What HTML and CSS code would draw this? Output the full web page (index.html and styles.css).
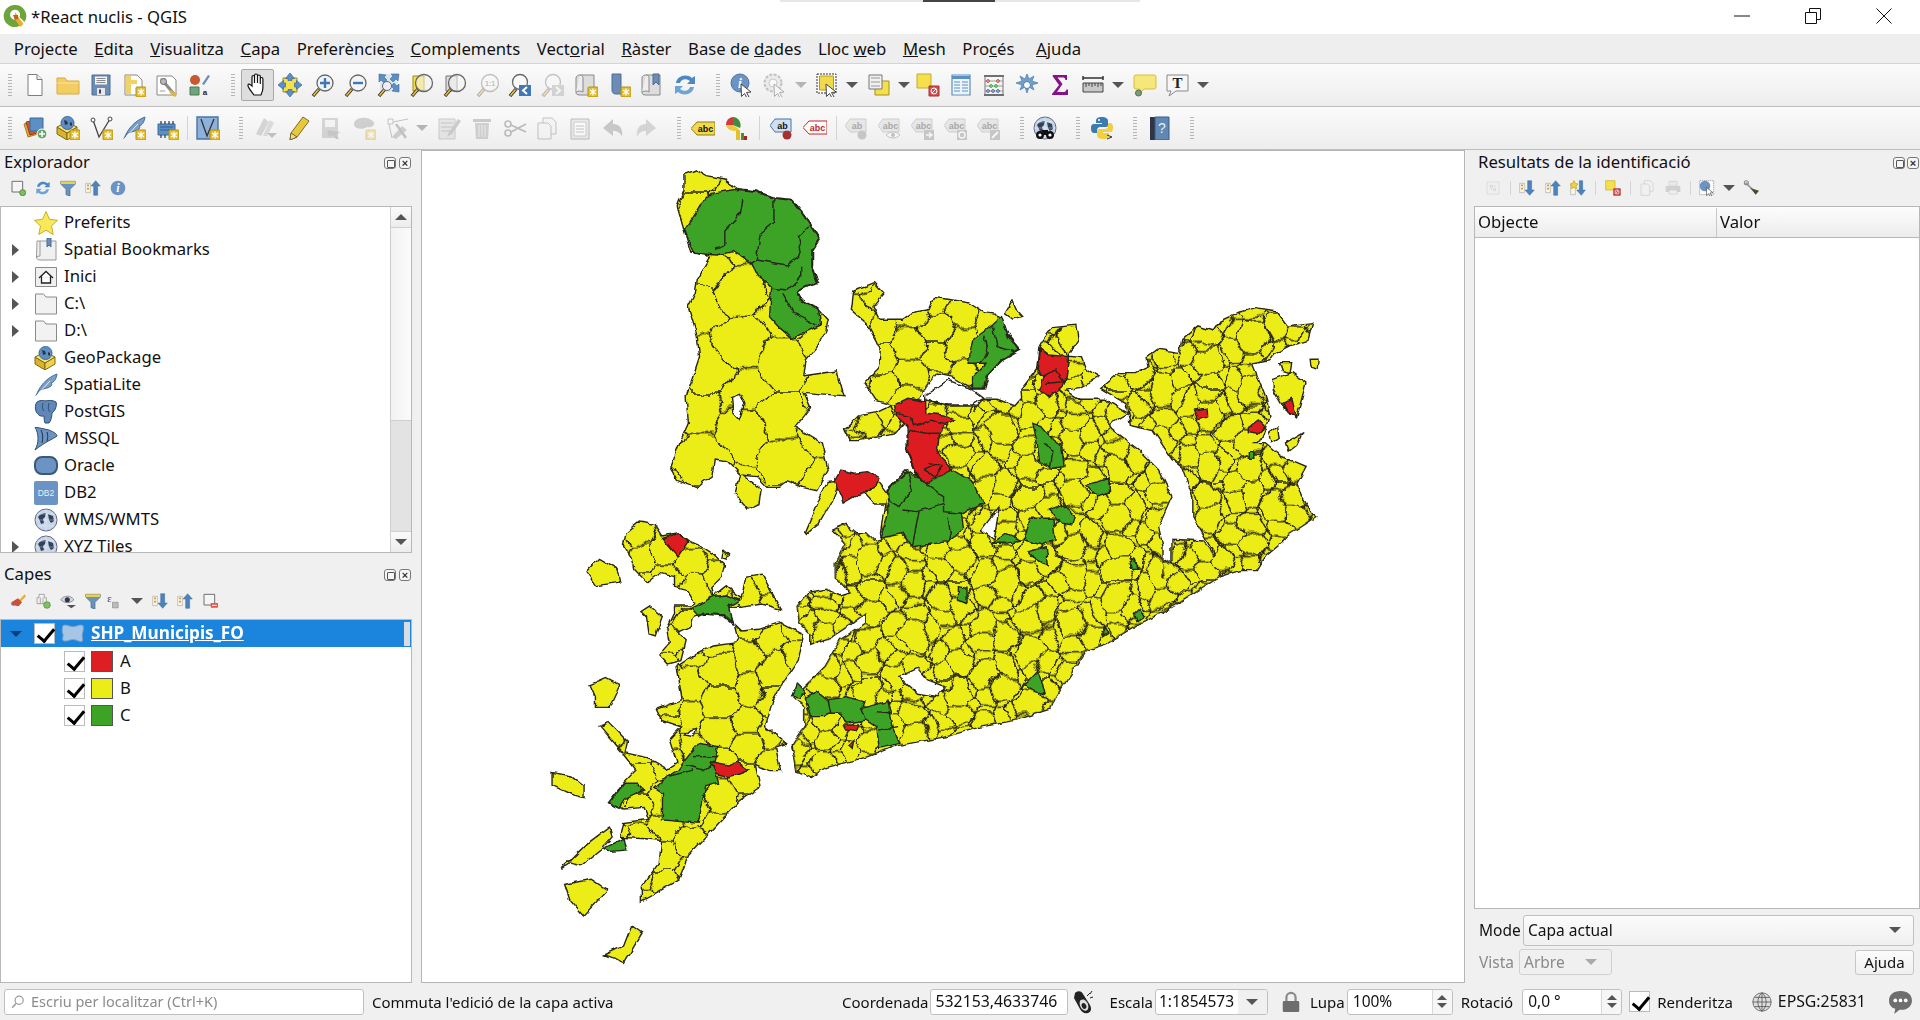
FILE: index.html
```html
<!DOCTYPE html>
<html lang="ca">
<head>
<meta charset="utf-8">
<title>*React nuclis - QGIS</title>
<link rel="stylesheet" href="styles.css">
</head>
<body>
<svg class="defs" width="0" height="0" aria-hidden="true">
<defs>
<g id="badge"><rect x="14" y="14" width="10" height="10" rx="1" fill="#e5bf30" stroke="#b09015"/><path d="M19 15.5v7M16 17l6 4M22 17l-6 4" stroke="#fff" stroke-width="1.3"/></g>
<g id="cur"><path d="M11 11l10 8-4.500 .5 2.500 4.500-2 1-2.500-4.500-3 3z" fill="#fff" stroke="#333" stroke-width=".9"/></g>
<g id="hdl"><path d="M2 23l6-7" stroke="#333" stroke-width="3.400"/><path d="M2.500 22.500l5-6" stroke="#eac23c" stroke-width="1.600"/></g>
<symbol id="new" viewBox="0 0 24 24"><path d="M5 1.500h9l5 5v16H5z" fill="#fff" stroke="#7d7d7d"/><path d="M14 1.500v5h5" fill="#eee" stroke="#7d7d7d"/></symbol>
<symbol id="open" viewBox="0 0 24 24"><path d="M1 5h8l2 3h12v13H1z" fill="#f2ce62" stroke="#dca83a"/><path d="M1 10h22" stroke="#f9e59a"/></symbol>
<symbol id="save" viewBox="0 0 24 24"><path d="M3 2h18v20H3z" fill="#6b8cb4" stroke="#4c6c96"/><path d="M6 3.500h12v8H6z" fill="#f3f3f3"/><path d="M7.500 5.500h9M7.500 7.500h9M7.500 9.500h9" stroke="#888"/><path d="M8 15h8v7H8z" fill="#e8e8e8"/><path d="M10 16.500h2v4h-2z" fill="#445"/></symbol>
<symbol id="saveas" viewBox="0 0 24 24"><path d="M3 2h12l5 5v15H3z" fill="#fff" stroke="#888"/><path d="M4 3h5v18H4z" fill="#f0d368"/><path d="M9 7h6v4H9z" fill="#f0d368"/><use href="#badge"/></symbol>
<symbol id="layout" viewBox="0 0 24 24"><path d="M2 3h15l4 4v15H2z" fill="#fff" stroke="#888"/><path d="M5 6h6M5 9h3M5 18h5" stroke="#999"/><path d="M8 8l11 13" stroke="#8a8a8a" stroke-width="3"/><path d="M15 18l6 5" stroke="#dcb63c" stroke-width="3"/><circle cx="8.500" cy="8.500" r="3" fill="#bbb" stroke="#666"/></symbol>
<symbol id="style" viewBox="0 0 24 24"><circle cx="8" cy="7" r="5" fill="#c9582f"/><path d="M3 14h9v8H3z" fill="#6fa57a" stroke="#4b7a55"/><path d="M15 11l6-9 2 1-6 9z" fill="#6b8cb4"/><text x="18" y="22" class="ictext">a</text></symbol>
<symbol id="hand" viewBox="0 0 24 24"><path d="M9 22c-2-3-6-7-6-9.500s2-1.500 4 .5V4c0-2 2.500-2 2.500 0v6V2.500c0-2 3-2 3 0V10V3.500c0-2 2.800-2 2.800 0V11V6c0-2 2.600-2 2.600 0v9c0 3-1 5-2 7z" fill="#fff" stroke="#111" stroke-width="1.200"/></symbol>
<symbol id="pan" viewBox="0 0 24 24"><path d="M5 5h14v14H5z" fill="#f4df4c" stroke="#9a8a20"/><path d="M12 0l4.500 5.500H14v2h-4v-2H7.500zM12 24l4.500-5.500H14v-2h-4v2H7.500zM0 12l5.500-4.500V10h2v4h-2v2.500zM24 12l-5.500-4.500V10h-2v4h2v2.500z" fill="#5c8fc4" stroke="#3b6a9c" stroke-width=".7"/></symbol>
<symbol id="zin" viewBox="0 0 24 24"><use href="#hdl"/><circle cx="14" cy="10" r="8" fill="#f2f5f8" stroke="#666" stroke-width="1.300"/><path d="M14 5v10M9 10h10" stroke="#3f78b3" stroke-width="2.400"/></symbol>
<symbol id="zout" viewBox="0 0 24 24"><use href="#hdl"/><circle cx="14" cy="10" r="8" fill="#f2f5f8" stroke="#666" stroke-width="1.300"/><path d="M9 10h10" stroke="#3f78b3" stroke-width="2.400"/></symbol>
<symbol id="full" viewBox="0 0 24 24"><path d="M3 1h18v18H3z" fill="#dde6ef"/><path d="M2 1l7 1-2 2 3 3-3 3-3-3-2 2zM22 1l-1 7-2-2-3 3-3-3 3-3-2-2zM22 19l-7-1 2-2-3-3 3-3 3 3 2-2z" fill="#5c8fc4" stroke="#3b6a9c" stroke-width=".6"/><use href="#hdl"/><circle cx="10" cy="13" r="4.500" fill="#eef" stroke="#666"/></symbol>
<symbol id="zsel" viewBox="0 0 24 24"><path d="M3 3h11v15H3z" fill="#f4df4c" stroke="#9a8a20"/><use href="#hdl"/><circle cx="14" cy="10" r="8.500" fill="#f4f4f0" fill-opacity=".55" stroke="#666" stroke-width="1.300"/></symbol>
<symbol id="zlay" viewBox="0 0 24 24"><path d="M3 3h11v15H3z" fill="#ddd" stroke="#777"/><use href="#hdl"/><circle cx="14" cy="10" r="8.500" fill="#f4f4f0" fill-opacity=".55" stroke="#666" stroke-width="1.300"/></symbol>
<symbol id="z11" viewBox="0 0 24 24"><g opacity=".38"><use href="#hdl"/><circle cx="14" cy="10" r="8.500" fill="#fafafa" stroke="#666" stroke-width="1.300"/><text x="14" y="13" class="ictext small">1:1</text></g></symbol>
<symbol id="zlast" viewBox="0 0 24 24"><use href="#hdl"/><circle cx="12" cy="9" r="7.500" fill="#fafafa" stroke="#666" stroke-width="1.300"/><path d="M11 12h12v11H11z" fill="#3f78b3"/><path d="M19 14l-4 3.500 4 3.500" fill="none" stroke="#fff" stroke-width="2"/></symbol>
<symbol id="znext" viewBox="0 0 24 24"><g opacity=".35"><use href="#hdl"/><circle cx="12" cy="9" r="7.500" fill="#fafafa" stroke="#666" stroke-width="1.300"/><path d="M11 12h12v11H11z" fill="#999"/><path d="M15 14l4 3.500-4 3.500" fill="none" stroke="#fff" stroke-width="2"/></g></symbol>
<symbol id="scroll" viewBox="0 0 24 24"><path d="M6 2h14v20H6c-3 0-4-1-4-3V5c0-2 2-3 4-3z" fill="#ddd" stroke="#888"/><path d="M6 2c3 0 3 3 3 3v14c-2-1.500-5-1-7 0" fill="#eee" stroke="#888"/></symbol>
<symbol id="newmap" viewBox="0 0 24 24"><use href="#scroll"/><use href="#badge"/></symbol>
<symbol id="newbm" viewBox="0 0 24 24"><path d="M5 1h9v16l4 4H9c-3 0-4-2-4-4z" fill="#6b8cb4" stroke="#4c6c96"/><use href="#badge"/></symbol>
<symbol id="showbm" viewBox="0 0 24 24"><use href="#scroll"/><path d="M13 1h6v11l-3-3-3 3z" fill="#6b8cb4" stroke="#4c6c96"/></symbol>
<symbol id="refresh" viewBox="0 0 24 24"><path d="M3 10C4 3 13 0 19 5l3-2v8h-8l3-3c-4-3-9-2-10 2z" fill="#4d88c4"/><path d="M21 14c-1 7-10 10-16 5l-3 2v-8h8l-3 3c4 3 9 2 10-2z" fill="#6ea3d6"/></symbol>
<symbol id="ident" viewBox="0 0 24 24"><circle cx="10" cy="10" r="9" fill="#6b93c4" stroke="#4c73a2"/><text x="10" y="15" class="ictext italic">i</text><use href="#cur"/></symbol>
<symbol id="actions" viewBox="0 0 24 24"><g opacity=".4"><circle cx="10" cy="10" r="8.500" fill="#ddd" stroke="#777" stroke-width="2" stroke-dasharray="3 1.500"/><circle cx="10" cy="10" r="4" fill="#fff" stroke="#888"/><use href="#cur"/></g></symbol>
<symbol id="select" viewBox="0 0 24 24"><path d="M2 1h19v19H2z" fill="#fff" stroke="#333" stroke-dasharray="2 1"/><path d="M4.500 3h14v14h-14z" fill="#f2d94c" stroke="#b59c20"/><use href="#cur"/></symbol>
<symbol id="select2" viewBox="0 0 24 24"><path d="M8 8h14v14H8z" fill="#f4df4c" stroke="#a59020"/><path d="M2 2h13v14H2z" fill="#f1f1f1" stroke="#777"/><path d="M4 5h9M4 9h9M4 13h9" stroke="#999"/></symbol>
<symbol id="desel" viewBox="0 0 24 24"><path d="M1 1h14v14H1z" fill="#f4df4c" stroke="#c5ac2a"/><path d="M13 13h10v10H13z" fill="#d8494c" stroke="#a33"/><circle cx="18" cy="18" r="3" fill="none" stroke="#fff"/><path d="M16 20l4-4" stroke="#fff"/></symbol>
<symbol id="table" viewBox="0 0 24 24"><path d="M3 2h18v20H3z" fill="#eef4fa" stroke="#5c8fc4" stroke-width="1.200"/><path d="M3 3h18v3H3z" fill="#5c8fc4"/><path d="M5 9h6M13 9h6M5 12h6M13 12h6M5 15h6M13 15h6M5 18h6M13 18h6" stroke="#5c8fc4" stroke-width="1.200"/></symbol>
<symbol id="abacus" viewBox="0 0 24 24"><path d="M2 3h20M2 22h20" stroke="#444" stroke-width="1.600"/><path d="M3 3v19M21 3v19" stroke="#777"/><path d="M3 8h18M3 13h18M3 18h18" stroke="#888" stroke-width=".8"/><g fill="none" stroke-width="1"><circle cx="6" cy="8" r="1.400" stroke="#c44"/><circle cx="16" cy="8" r="1.400" stroke="#c44"/><circle cx="9" cy="13" r="1.400" stroke="#3a3"/><circle cx="14" cy="13" r="1.400" stroke="#3a3"/><circle cx="6" cy="18" r="1.400" stroke="#46a"/><circle cx="11" cy="18" r="1.400" stroke="#46a"/><circle cx="16" cy="18" r="1.400" stroke="#46a"/></g></symbol>
<symbol id="gear" viewBox="0 0 24 24"><path d="M12 1l2 5 5-3-2 5 6 2-6 2 2 5-5-3-2 6-2-6-5 3 2-5-6-2 6-2-2-5 5 3z" fill="#6ea0d0" stroke="#4c7bab" stroke-width=".7"/><circle cx="12" cy="12" r="3.500" fill="#fff" stroke="#4c7bab"/></symbol>
<symbol id="sigma" viewBox="0 0 24 24"><path d="M5 2h14v5h-1.500c-.5-2-1-2.500-3-2.500H9.500L14.500 11 9 19h6c2 0 3-.5 3.500-2.500H20V22H4v-1l7-9L4.500 3z" fill="#85128a"/></symbol>
<symbol id="ruler" viewBox="0 0 24 24"><path d="M2 5h20M2 3v4M22 3v4" stroke="#333" stroke-width="1.500"/><path d="M2 10h20v9H2z" fill="#c9c9c9" stroke="#444"/><path d="M5 10v4M8 10v3M11 10v4M14 10v3M17 10v4M20 10v3" stroke="#444"/></symbol>
<symbol id="tip" viewBox="0 0 24 24"><path d="M3 2h18a2 2 0 0 1 2 2v10a2 2 0 0 1-2 2H11l-4 4v-4H3a2 2 0 0 1-2-2V4a2 2 0 0 1 2-2z" fill="#f5e87a" stroke="#d6bc3c"/><circle cx="5.500" cy="20" r="3" fill="#7aa06a" stroke="#567"/></symbol>
<symbol id="txtann" viewBox="0 0 24 24"><path d="M1 2h21v16H10l-7 5 2-5H1z" fill="#f6f6f6" stroke="#888"/><text x="11.500" y="15" class="ictext serif">T</text></symbol>
<symbol id="dsm" viewBox="0 0 24 24"><path d="M1 8l10-3 4 13-10 3z" fill="#e3a83c" stroke="#a97a20"/><path d="M3 6l10-2 4 12-10 3z" fill="#c9582f" stroke="#8f3d20"/><path d="M7 2h13v13H7z" fill="#5c8fc4" stroke="#3b6a9c"/><circle cx="19" cy="18" r="5" fill="#6ca36c" stroke="#fff"/><path d="M19 15v6M16 18h6" stroke="#fff" stroke-width="1.600"/></symbol>
<symbol id="gpkg" viewBox="0 0 24 24"><path d="M1 11l10 6v7L1 18z" fill="#d9b32c" stroke="#7c6a14"/><path d="M21 11l-10 6v7l10-6z" fill="#f0d34c" stroke="#7c6a14"/><path d="M1 11l10-5 10 5-10 6z" fill="#f5e27a" stroke="#7c6a14"/><circle cx="11.500" cy="7" r="6.500" fill="#5c8fc4" stroke="#3b6a9c"/><path d="M8 4l3 1 1 3-3 1zM14 6l2 1v3l-2-1z" fill="#334"/></symbol>
<symbol id="newgpkg" viewBox="0 0 24 24"><use href="#gpkg"/><use href="#badge"/></symbol>
<symbol id="newshp" viewBox="0 0 24 24"><path d="M4 4l6 17L21 3" fill="none" stroke="#444" stroke-width="1.300"/><circle cx="4" cy="4" r="2" fill="#fff" stroke="#444"/><circle cx="21" cy="3" r="2" fill="#fff" stroke="#444"/><use href="#badge"/></symbol>
<symbol id="feather" viewBox="0 0 24 24"><path d="M2 23C5 14 12 5 23 1c-1 6-3 8-6 9 1 1 1 2 0 3-3 3-9 2-12 5z" fill="#7c9fc8" stroke="#456d9c"/><path d="M2 23L16 8" stroke="#fff" stroke-width=".8"/></symbol>
<symbol id="newfeather" viewBox="0 0 24 24"><use href="#feather"/><use href="#badge"/></symbol>
<symbol id="chip" viewBox="0 0 24 24"><path d="M3 8h17v11H3z" fill="#5c8fc4" stroke="#3b6a9c"/><path d="M6 5v3M10 5v3M14 5v3M18 5v3M6 19v3M10 19v3" stroke="#333" stroke-width="1.200"/><path d="M5 11h13M5 14h13" stroke="#2c5c92"/><use href="#badge"/></symbol>
<symbol id="virt" viewBox="0 0 24 24"><path d="M1 1h21v22H1z" fill="#8db1d8" stroke="#4c73a2" stroke-width="1.400"/><path d="M5 3l6 17L18 3" fill="none" stroke="#333" stroke-width="1.300"/><use href="#badge"/></symbol>
<symbol id="g-edits" viewBox="0 0 24 24"><g opacity=".35"><path d="M3 18L11 2l5 4-8 14z" fill="#999"/><path d="M10 20L17 4l4 3-7 13z" fill="#aaa"/><path d="M14 17h10l-5 5z" fill="#666"/></g></symbol>
<symbol id="pencil" viewBox="0 0 24 24"><path d="M4 24l1-7L17 1l6 4-12 16z" fill="#eac83c" stroke="#7a6a20"/><path d="M4 24l1-7 6 4z" fill="#e8d9b0" stroke="#7a6a20"/></symbol>
<symbol id="g-save" viewBox="0 0 24 24"><g opacity=".35"><path d="M3 2h16v20H3z" fill="#999"/><path d="M6 4h10v7H6z" fill="#eee"/><path d="M8 14l13 2-4 3 3 4-3 0-3-4-4 2z" fill="#777"/></g></symbol>
<symbol id="g-add" viewBox="0 0 24 24"><g opacity=".35"><path d="M3 5c5-5 14-4 19 1 1 5-5 6-7 5-2 2-7 2-10 1-3-1-4-5-2-7z" fill="#888"/><use href="#badge"/></g></symbol>
<symbol id="g-vert" viewBox="0 0 24 24"><g opacity=".35"><path d="M3 3h5v5H3zM4 8l3 14M8 6l15-3" fill="none" stroke="#666"/><path d="M7 21l10-11 5 4-11 9z" fill="#888"/><path d="M11 8l10 14" stroke="#666" stroke-width="2.500"/></g></symbol>
<symbol id="g-mod" viewBox="0 0 24 24"><g opacity=".38"><path d="M2 3h16v20H2z" fill="#ccc" stroke="#888"/><path d="M4 7h12M4 11h12M4 15h12" stroke="#777"/><path d="M10 21l2-5 9-13 3 2-9 13z" fill="#888"/></g></symbol>
<symbol id="g-del" viewBox="0 0 24 24"><g opacity=".4"><path d="M3 3h18v3H3z" fill="#888"/><path d="M5 7h14l-1 16H6z" fill="#999"/><path d="M9 9v12M12 9v12M15 9v12" stroke="#ddd"/></g></symbol>
<symbol id="g-cut" viewBox="0 0 24 24"><g opacity=".4" fill="none" stroke="#666" stroke-width="1.600"><circle cx="5" cy="8" r="3"/><circle cx="5" cy="17" r="3"/><path d="M8 9l15 7M8 16L23 8"/></g></symbol>
<symbol id="g-copy" viewBox="0 0 24 24"><g opacity=".4" fill="#f2f2f2" stroke="#777"><path d="M8 2h9l4 4v12H8z"/><path d="M3 7h10l3 3v13H3z"/></g></symbol>
<symbol id="g-paste" viewBox="0 0 24 24"><g opacity=".45"><path d="M3 3h18v20H3z" fill="#ddd" stroke="#777"/><path d="M6 6h12v14H6z" fill="#fff" stroke="#999"/><path d="M8 10h8M8 13h8M8 16h8" stroke="#888"/></g></symbol>
<symbol id="g-undo" viewBox="0 0 24 24"><path d="M2 12L12 3v5c7 0 10 5 9 13-2-5-5-6-9-6v5z" fill="#c8c8c8"/></symbol>
<symbol id="g-redo" viewBox="0 0 24 24"><path d="M22 12L12 3v5C5 8 2 13 3 21c2-5 5-6 9-6v5z" fill="#d4d4d4"/></symbol>
<symbol id="lab-y" viewBox="0 0 24 24"><path d="M6 6h18v13H6L0 12.500z" fill="#f2d94c" stroke="#8f7c18"/><text x="14.500" y="16" class="ictext lab">abc</text></symbol>
<symbol id="diag" viewBox="0 0 24 24"><path d="M2 9a7.500 7.500 0 0 1 7-8v8z" fill="#d23b3b"/><path d="M9 1a8 8 0 0 1 7 11L9 9z" fill="#3e8e3e"/><path d="M2 9h7l6 4a8 8 0 0 1-13-4z" fill="#e8cc3a"/><path d="M12 14h4v10h-4z" fill="#e0c02c"/><path d="M17 17h3v7h-3z" fill="#4c8e30"/><path d="M20 20h3v4h-3z" fill="#a22"/></symbol>
<symbol id="lab-b" viewBox="0 0 24 24"><path d="M5 3h16v13H5L0 9.500z" fill="#cfe0f2" stroke="#4c73a2"/><text x="12.500" y="13" class="ictext lab">ab</text><path d="M16 14h2v3h-2z" fill="#fff"/><circle cx="17" cy="19" r="4.500" fill="#a63030"/></symbol>
<symbol id="lab-r" viewBox="0 0 24 24"><path d="M6 5h18v13H6L0 11.500z" fill="#fff" stroke="#c22"/><text x="14.500" y="15" class="ictext lab red">abc</text></symbol>
<symbol id="g-lp" viewBox="0 0 24 24"><g opacity=".35"><path d="M5 3h16v13H5L0 9.500z" fill="#ccc" stroke="#888"/><text x="12" y="13" class="ictext lab">ab</text><circle cx="17" cy="19" r="4.500" fill="#777"/></g></symbol>
<symbol id="g-lv" viewBox="0 0 24 24"><g opacity=".35"><path d="M5 3h16v13H5L0 9.500z" fill="#ccc" stroke="#888"/><text x="12.500" y="13" class="ictext lab">abc</text><path d="M8 19c4-4 10-4 14 0-4 4-10 4-14 0z" fill="#fff" stroke="#666"/><circle cx="15" cy="19" r="2" fill="#666"/></g></symbol>
<symbol id="g-lm" viewBox="0 0 24 24"><g opacity=".35"><path d="M5 3h16v13H5L0 9.500z" fill="#ccc" stroke="#888"/><text x="12.500" y="13" class="ictext lab">abc</text><path d="M13 14h10v10H13z" fill="#777"/><path d="M15 19h5M18 16.500l3 2.500-3 2.500" fill="none" stroke="#fff" stroke-width="1.500"/></g></symbol>
<symbol id="g-lr" viewBox="0 0 24 24"><g opacity=".35"><path d="M5 3h16v13H5L0 9.500z" fill="#ccc" stroke="#888"/><text x="12.500" y="13" class="ictext lab">abc</text><path d="M13 14h10v10H13z" fill="#777"/><circle cx="18" cy="19" r="3" fill="none" stroke="#fff" stroke-width="1.500"/></g></symbol>
<symbol id="g-le" viewBox="0 0 24 24"><g opacity=".35"><path d="M5 3h16v13H5L0 9.500z" fill="#ccc" stroke="#888"/><text x="12.500" y="13" class="ictext lab">abc</text><path d="M13 14h10v10H13z" fill="#777"/><path d="M15 22l6-6" stroke="#fff" stroke-width="2"/></g></symbol>
<symbol id="globe" viewBox="0 0 24 24"><circle cx="12" cy="12" r="11" fill="#c5d6e8" stroke="#668"/><path d="M4 9c2-3 5-4 8-4l-1 4-2 2 1 4-3 1-1-3zM14 6l5 2 1 5-3 2-2-3z" fill="#33415a"/><path d="M1 12h22M12 1v22M3 6h18M3 18h18" stroke="#fff" stroke-width=".5" opacity=".7"/></symbol>
<symbol id="metasearch" viewBox="0 0 24 24"><use href="#globe"/><path d="M3 19a4 4 0 1 0 8 0 4 4 0 1 0-8 0zM13 19a4 4 0 1 0 8 0 4 4 0 1 0-8 0z" fill="#111"/><path d="M9 14h6v5H9z" fill="#111"/><circle cx="7" cy="19" r="1.600" fill="#fff"/><circle cx="17" cy="19" r="1.600" fill="#fff"/></symbol>
<symbol id="python" viewBox="0 0 24 24"><path d="M12 1c-4 0-6 1-6 4v2h6v1H4c-3 0-3 3-3 5s1 4 3 4h3v-3c0-2 2-3 3-3h6c2 0 2-1 2-3V5c0-3-3-4-6-4z" fill="#3d7ab0"/><path d="M13 23c4 0 6-1 6-4v-2h-6v-1h8c2 0 2-3 2-5s-1-4-3-4h-2v3c0 2-2 3-3 3H9c-2 0-2 1-2 3v3c0 3 3 4 6 4z" fill="#f2cf3e"/><circle cx="9" cy="4" r="1" fill="#fff"/><path d="M17 19l5 2-5 2" fill="none" stroke="#333"/></symbol>
<symbol id="help" viewBox="0 0 24 24"><path d="M3 1h5v23H3z" fill="#2f3542"/><path d="M8 1h14v23H8z" fill="#5f88b4" stroke="#3b5c84"/><text x="15" y="17" class="ictext helpq">?</text></symbol>
<symbol id="star" viewBox="0 0 24 24"><path d="M12 .5l3.500 7.800 8 1-6 5.700 1.700 8.500-7.200-4.300-7.200 4.300L6.500 15 .5 9.300l8-1z" fill="#f8e95a" stroke="#c9ad28"/></symbol>
<symbol id="bookm" viewBox="0 0 24 24"><path d="M3 3h19v19H6c-2 0-3.500-1-3.500-3z" fill="#f0f0f0" stroke="#999"/><path d="M6 3v15c-1 0-2.500.5-3.500 1" fill="none" stroke="#999"/><path d="M13 0h4v9l-2-2-2 2z" fill="#6b8cb4" stroke="#4c6c96"/></symbol>
<symbol id="home" viewBox="0 0 24 24"><path d="M1.500 2.500h21v19h-21z" fill="#f0f0f0" stroke="#8a8a8a"/><path d="M5 13l7-6.500 7 6.500M7.500 11.500V18h9v-6.500" fill="#fff" stroke="#222" stroke-width="1.300"/></symbol>
<symbol id="dir" viewBox="0 0 24 24"><path d="M1.500 2h8l2.500 3h10.500v17h-21z" fill="#f2f2f2" stroke="#8a8a8a"/></symbol>
<symbol id="elephant" viewBox="0 0 24 24"><path d="M3 2c3-2 6-2 8-1 3-1 8-1 11 1 1 2 0 7-2 9l-2 2c0 3-1 8-3 10h-4c-1-3-1-5-1-7-4 1-7-2-8-5C1 9 1 4 3 2z" fill="#5f88b8" stroke="#2f4f76" stroke-width="1"/><path d="M9 3c-1 3-1 6 1 8M15 3c-1 4-1 7 1 9" fill="none" stroke="#2f4f76" stroke-width="1"/></symbol>
<symbol id="mssql" viewBox="0 0 24 24"><path d="M1 0l14 3c5 2 8 4 8 6-4 3-12 6-22 14 4-7 4-16 0-23z" fill="#6b93c4" stroke="#2f4f76" stroke-width="1"/><path d="M7 3c2 4 2 8 1 13M13 5c1 3 1 6 0 9" fill="none" stroke="#234"/></symbol>
<symbol id="oracle" viewBox="0 0 24 24"><rect x="1" y="3" width="22" height="17" rx="7" fill="#6b93c4" stroke="#3a5878" stroke-width="2"/></symbol>
<symbol id="db2" viewBox="0 0 24 24"><rect x="0" y="0" width="24" height="24" rx="2" fill="#6b93c4"/><text x="12" y="15" class="ictext db2">DB2</text></symbol>
<symbol id="layer-ic" viewBox="0 0 24 24"><path d="M1 3c4-2 6 1 11 1s7-3 11-1c1 5-1 8-1 10 0 3 1 5 0 7-3 1-6-2-10-2s-7 3-11 1c-1-3 1-5 0-7S0 7 1 3z" fill="#a6c4e4" stroke="#7ea1c8"/></symbol>
<symbol id="s-add" viewBox="0 0 24 24"><path d="M3 2h16v16H3z" fill="#f5f5f5" stroke="#666" stroke-width="1.400"/><circle cx="19" cy="19" r="4.500" fill="#7fbf62" stroke="#4d8a35" stroke-width="1.400"/></symbol>
<symbol id="s-filter" viewBox="0 0 24 24"><path d="M1 2h22v4l-8 8v10l-6-2v-8L1 6z" fill="#6a94bd" stroke="#44658a"/><path d="M1 2h22v4H1z" fill="#e8d34c"/></symbol>
<symbol id="s-collapse" viewBox="0 0 24 24"><path d="M1 5h7v14H1z" fill="#fbf7e8" stroke="#aaa"/><path d="M3 8h3M3 13h3" stroke="#d4a030" stroke-width="2.500"/><path d="M16 1l7 8h-4v14h-6V9H9z" fill="#4d83bb" stroke="#38689a" stroke-width=".7"/></symbol>
<symbol id="s-expand" viewBox="0 0 24 24"><path d="M1 5h7v14H1z" fill="#fbf7e8" stroke="#aaa"/><path d="M3 8h3M3 13h3" stroke="#d4a030" stroke-width="2.500"/><path d="M16 23l7-8h-4V1h-6v14H9z" fill="#4d83bb" stroke="#38689a" stroke-width=".7"/></symbol>
<symbol id="s-expsel" viewBox="0 0 24 24"><path d="M1 8h7v14H1z" fill="#fbf7e8" stroke="#aaa"/><path d="M6 1l2 4 4 1-3 3 1 4-4-2-4 2 1-4-3-3 4-1z" fill="#f2d33c" stroke="#c49a1c"/><path d="M17 23l6-8h-4V1h-5v14h-4z" fill="#4d83bb" stroke="#38689a" stroke-width=".7"/></symbol>
<symbol id="s-info" viewBox="0 0 24 24"><circle cx="12" cy="12" r="11" fill="#6b93c4"/><text x="12" y="18" class="ictext italic big">i</text></symbol>
<symbol id="s-brush" viewBox="0 0 24 24"><path d="M14 10l8-8 2 3-8 8z" fill="#e8b02c"/><path d="M2 14l10-6 6 6-5 6-9-2z" fill="#c8503c"/><path d="M2 14l5 6-5-2z" fill="#777"/></symbol>
<symbol id="s-group" viewBox="0 0 24 24"><path d="M6 2h8v5h3v9H3V7h3z" fill="#f0f0f0" stroke="#888"/><path d="M8 7v9M12 7v9" stroke="#888"/><circle cx="18" cy="18" r="5" fill="#7fbf62" stroke="#4d8a35"/></symbol>
<symbol id="s-eye" viewBox="0 0 24 24"><path d="M1 10c6-7 14-7 20 0-6 6-14 6-20 0z" fill="#d0d8e0" stroke="#667"/><circle cx="11" cy="10" r="3.800" fill="#334"/><path d="M10 18h14l-7 5z" fill="#555"/></symbol>
<symbol id="s-eps" viewBox="0 0 24 24"><text x="7" y="14" class="ictext eps">ε</text><path d="M12 14h9v9h-9z" fill="#bbb" stroke="#888"/></symbol>
<symbol id="s-rem" viewBox="0 0 24 24"><path d="M3 2h16v16H3z" fill="#f5f5f5" stroke="#666" stroke-width="1.400"/><rect x="13" y="15" width="11" height="7" rx="1" fill="#e0564c"/><path d="M15 18.500h7" stroke="#fff" stroke-width="1.600"/></symbol>
<symbol id="s-tree" viewBox="0 0 24 24"><g opacity=".3"><path d="M3 3h18v18H3z" fill="#eee" stroke="#999"/><path d="M8 8h3v3H8zM13 13h3v3h-3zM8 14h3M13 9h3" stroke="#777" fill="none"/></g></symbol>
<symbol id="s-copy" viewBox="0 0 24 24"><g opacity=".3" fill="#f2f2f2" stroke="#777"><path d="M8 1h9l4 4v12H8z"/><path d="M3 6h10l3 3v14H3z"/></g></symbol>
<symbol id="s-print" viewBox="0 0 24 24"><g opacity=".35"><path d="M6 2h12v7H6z" fill="#ddd" stroke="#888"/><path d="M1 9h22v9H1z" fill="#999"/><path d="M6 15h12v6H6z" fill="#eee" stroke="#888"/></g></symbol>
<symbol id="s-idsel" viewBox="0 0 24 24"><path d="M1 1h21v21H1z" fill="#fff" stroke="#888" stroke-dasharray="2 1"/><circle cx="9" cy="9" r="8" fill="#6b93c4"/><use href="#cur"/></symbol>
<symbol id="s-wrench" viewBox="0 0 24 24"><path d="M4 4l10 10" stroke="#999" stroke-width="2.500"/><circle cx="5" cy="4" r="3" fill="none" stroke="#888" stroke-width="1.600"/><path d="M11 12l13 4-5 6z" fill="#4a4a30"/></symbol>
<symbol id="mouse" viewBox="0 0 24 24"><path d="M3 3c3-3 7-2 8 1l7 11c2 4 1 7-2 8-4 1-6-1-8-4L2 8z" fill="#222"/><ellipse cx="12" cy="15" rx="4" ry="6" fill="#ddd" transform="rotate(-25 12 15)"/><ellipse cx="12" cy="16" rx="2.200" ry="3" fill="#222" transform="rotate(-25 12 16)"/><path d="M8 3l2 7M18 3l-3 3M21 7l-3 1M20 1l-2 3" stroke="#222" fill="none"/></symbol>
<symbol id="lock" viewBox="0 0 24 24"><path d="M7 11V7a5 5 0 0 1 10 0v4" fill="none" stroke="#8a8a8a" stroke-width="2.400"/><rect x="3" y="11" width="18" height="12" rx="1.500" fill="#6d6d6d"/></symbol>
<symbol id="crs" viewBox="0 0 24 24"><circle cx="12" cy="12" r="10" fill="#ddd" stroke="#666"/><path d="M2 12h20M12 2v20M4 7h16M4 17h16M12 2c-6 5-6 15 0 20M12 2c6 5 6 15 0 20" stroke="#555" fill="none" stroke-width=".9"/></symbol>
<symbol id="chat" viewBox="0 0 24 24"><path d="M12 2c7 0 11 4 11 9s-4 9-10 9h-2l-5 4 1-5c-4-1-6-4-6-8 0-5 4-9 11-9z" fill="#6e6e6e"/><circle cx="7" cy="11" r="1.800" fill="#fff"/><circle cx="12" cy="11" r="1.800" fill="#fff"/><circle cx="17" cy="11" r="1.800" fill="#fff"/></symbol>
<symbol id="qgis" viewBox="0 0 24 24"><path d="M12 1a11 11 0 1 0 6 20l-4.500-5.500a5 5 0 1 1 3-2.500l5 5A11 11 0 0 0 12 1z" fill="#6ea43c"/><path d="M12 8l8.500 12-3 3-6-8z" fill="#e8b02c"/><path d="M10 11l5 0 0 4-3 1z" fill="#c75c2c"/></symbol>
<symbol id="search" viewBox="0 0 24 24"><circle cx="14" cy="9" r="7" fill="none" stroke="#999" stroke-width="2"/><path d="M9 14l-7 8" stroke="#999" stroke-width="2.400"/></symbol>
<filter id="mesh-wob" filterUnits="userSpaceOnUse" x="422" y="151" width="1042" height="832"><feTurbulence type="fractalNoise" baseFrequency="0.035" numOctaves="2" seed="11"/><feDisplacementMap in="SourceGraphic" scale="20" xChannelSelector="R" yChannelSelector="G"/></filter>
<filter id="mesh-wob2" filterUnits="userSpaceOnUse" x="422" y="151" width="1042" height="832"><feTurbulence type="fractalNoise" baseFrequency="0.022" numOctaves="2" seed="29"/><feDisplacementMap in="SourceGraphic" scale="26" xChannelSelector="G" yChannelSelector="R"/></filter>
<filter id="big-wob" filterUnits="userSpaceOnUse" x="422" y="151" width="1042" height="832"><feTurbulence type="fractalNoise" baseFrequency="0.025" numOctaves="2" seed="5"/><feDisplacementMap in="SourceGraphic" scale="30" xChannelSelector="G" yChannelSelector="R"/></filter>
<filter id="coast" filterUnits="userSpaceOnUse" x="422" y="151" width="1042" height="832"><feTurbulence type="fractalNoise" baseFrequency="0.11" numOctaves="2" seed="3"/><feDisplacementMap in="SourceGraphic" scale="5" xChannelSelector="R" yChannelSelector="G"/></filter>
<pattern id="hex-s" patternUnits="userSpaceOnUse" width="45" height="25.980"><path d="M0 12.990L7.500 0H22.500L30 12.990L22.500 25.980H7.500ZM30 12.990H45" class="hexline"/></pattern>
<pattern id="hex-x" patternUnits="userSpaceOnUse" width="84" height="48.500"><path d="M0 24.250L14 0H42L56 24.250L42 48.500H14ZM56 24.250H84" class="hexline"/></pattern>
<pattern id="hex-m" patternUnits="userSpaceOnUse" width="54" height="31.180"><path d="M0 15.590L9 0H27L36 15.590L27 31.180H9ZM36 15.590H54" class="hexline"/></pattern>
<polygon id="l-nw" transform="translate(640 150) scale(.4464 .3333)" points="100,75 125,62 150,82 190,92 218,118 260,125 300,145 340,150 370,200 385,235 402,265 385,300 385,350 398,400 370,410 350,425 360,450 400,480 420,510 415,540 395,590 370,630 365,680 440,665 455,735 365,725 380,770 345,830 405,880 420,960 395,1020 365,1010 330,990 310,1010 285,1010 260,975 225,970 270,1020 265,1060 240,1075 215,1030 225,970 195,930 165,925 160,975 125,1010 85,990 70,955 90,880 110,820 105,740 135,620 130,560 110,470 125,430 130,390 160,320 150,315 115,305 100,240 85,170 100,120"/>
<polygon id="l-north" transform="translate(640 150) scale(.4464 .3333)" points="480,425 525,400 545,430 520,470 535,510 590,510 610,490 650,480 660,445 690,450 735,460 770,490 800,495 825,560 850,600 810,630 780,670 770,715 745,715 700,680 665,670 640,710 625,745 570,765 530,750 505,700 535,660 540,600 530,570 510,520 475,480"/>
<polygon id="l-n2" transform="translate(640 150) scale(.4464 .3333)" points="820,490 835,455 840,480 852,498 835,505"/>
<polygon id="l-side" transform="translate(640 150) scale(.4464 .3333)" points="460,840 490,800 530,790 570,765 590,820 570,850 530,860 490,870 470,870"/>
<polygon id="l-ter" transform="translate(640 150) scale(.4464 .3333)" points="905,570 925,535 975,528 980,570 955,620 990,625 1000,660 1025,680 985,710 950,720 985,750 1040,750 1090,790 1040,830 950,900 860,800 855,720 890,660 895,595"/>
<polygon id="l-east" transform="translate(640 150) scale(.4464 .3333)" points="1035,715 1075,670 1110,670 1140,650 1135,625 1160,600 1210,610 1215,570 1250,530 1285,545 1300,515 1340,490 1380,475 1425,485 1450,530 1505,520 1495,570 1455,585 1420,610 1410,630 1370,640 1400,740 1410,800 1395,860 1370,880 1400,880 1435,920 1490,950 1470,1000 1480,1040 1510,1100 1470,1120 1440,1170 1400,1215 1380,1260 1310,1260 1270,1170 1240,1100 1240,1040 1215,950 1195,930 1150,840 1100,825 1090,760"/>
<polygon id="l-central" transform="translate(640 150) scale(.4464 .3333)" points="570,765 600,745 640,755 690,770 750,770 745,790 770,750 800,750 840,770 860,740 890,725 930,740 985,750 1040,790 1055,840 1115,900 1160,960 1190,1040 1160,1130 1170,1190 1170,1300 560,1300 540,1150 555,1020 600,960 625,985 600,900 600,830 575,800"/>
<polygon id="l-is1" transform="translate(640 150) scale(.4464 .3333)" points="1420,690 1460,670 1490,700 1470,800 1445,775 1420,720"/>
<polygon id="l-is2" transform="translate(640 150) scale(.4464 .3333)" points="1435,640 1458,640 1455,665 1440,660"/>
<polygon id="l-is3" transform="translate(640 150) scale(.4464 .3333)" points="1503,630 1520,630 1518,655 1505,650"/>
<polygon id="l-is4" transform="translate(640 150) scale(.4464 .3333)" points="1410,850 1425,835 1428,865 1415,875"/>
<polygon id="l-is5" transform="translate(640 150) scale(.4464 .3333)" points="1450,880 1480,855 1470,885 1455,900"/>
<polygon id="l-sliver" transform="translate(640 150) scale(.4464 .3333)" points="372,1150 400,1060 420,1000 445,995 430,1050 400,1120"/>
<polygon id="l-redw" transform="translate(640 150) scale(.4464 .3333)" points="505,1030 535,1000 552,1030 550,1060 525,1060"/>
<polygon id="l-low" transform="translate(540 500) scale(.5102 .3333)" points="700,0 680,40 670,90 680,120 660,130 640,100 620,100 600,75 575,90 600,130 580,190 580,230 610,280 590,290 560,270 525,280 505,320 510,370 530,400 530,430 570,410 610,370 640,335 640,370 590,420 560,500 520,560 500,595 520,620 520,680 495,740 500,770 505,815 530,830 560,800 640,770 700,735 790,710 860,680 930,660 1000,625 1010,590 1040,520 1070,450 1110,430 1170,375 1250,310 1330,230 1380,205 1440,130 1520,50 1480,0 1290,0 1300,60 1320,100 1355,130 1350,150 1320,170 1300,125 1240,120 1240,180 1220,190 1225,240 1165,200 1170,130 1150,0"/>
<polygon id="l-sw" transform="translate(540 500) scale(.5102 .3333)" points="170,100 195,68 225,75 240,110 270,100 290,125 320,145 340,165 360,195 355,230 335,260 340,290 365,260 395,300 405,230 435,225 450,270 470,325 435,310 395,320 365,320 375,365 360,345 320,340 300,350 295,380 275,395 260,385 285,420 275,480 250,490 235,465 255,430 250,390 265,340 265,320 295,320 305,310 290,270 265,260 265,225 235,215 210,245 185,205 180,170 165,135"/>
<polygon id="l-s1" transform="translate(540 500) scale(.5102 .3333)" points="92,215 115,178 150,210 155,245 110,255"/>
<polygon id="l-s2" transform="translate(540 500) scale(.5102 .3333)" points="360,155 368,165 365,175 358,172"/>
<polygon id="l-s3" transform="translate(540 500) scale(.5102 .3333)" points="200,335 215,320 238,350 225,405 215,400 210,350"/>
<polygon id="l-s4" transform="translate(540 500) scale(.5102 .3333)" points="100,555 130,535 155,555 135,620 110,620 110,590"/>
<polygon id="l-sbody" transform="translate(540 500) scale(.5102 .3333)" points="385,380 395,395 430,390 470,370 515,405 505,480 470,560 455,600 440,680 480,730 460,740 470,810 450,810 420,790 430,860 390,900 345,975 290,1065 270,1140 200,1200 200,1160 235,1090 240,1020 215,1015 160,1010 165,970 215,960 205,920 165,925 135,910 165,850 190,810 165,760 120,680 135,670 170,725 165,760 210,775 250,810 270,790 255,720 280,680 300,690 240,660 230,630 280,600 270,500 300,470 340,440 385,430 390,410"/>
<polygon id="l-s5" transform="translate(540 500) scale(.5102 .3333)" points="25,820 60,830 85,860 85,890 60,880 25,855"/>
<polygon id="l-s6" transform="translate(540 500) scale(.5102 .3333)" points="40,1105 60,1085 100,1025 135,985 140,1010 120,1045 80,1095 55,1085"/>
<polygon id="l-s7" transform="translate(540 500) scale(.5102 .3333)" points="50,1155 100,1140 130,1170 85,1245 60,1200"/>
<polygon id="l-s8" transform="translate(540 500) scale(.5102 .3333)" points="180,1280 198,1300 165,1385 130,1365 165,1340"/>
<clipPath id="clip-big"><use href="#l-nw"/></clipPath>
<clipPath id="clip-med"><use href="#l-sw"/><use href="#l-sbody"/><use href="#l-north"/></clipPath>
<clipPath id="clip-small"><use href="#l-ter"/><use href="#l-east"/><use href="#l-central"/><use href="#l-low"/><use href="#l-side"/></clipPath>
<g id="land"><use href="#l-nw"/><use href="#l-north"/><use href="#l-n2"/><use href="#l-side"/><use href="#l-ter"/><use href="#l-east"/><use href="#l-central"/><use href="#l-is1"/><use href="#l-is2"/><use href="#l-is3"/><use href="#l-is4"/><use href="#l-is5"/><use href="#l-sliver"/><use href="#l-redw"/><use href="#l-low"/><use href="#l-sw"/><use href="#l-s1"/><use href="#l-s2"/><use href="#l-s3"/><use href="#l-s4"/><use href="#l-sbody"/><use href="#l-s5"/><use href="#l-s6"/><use href="#l-s7"/><use href="#l-s8"/></g>
</defs>
</svg>

<div class="app">
  <header class="titlebar">
    <div class="topstrip"><span class="topdark"></span></div>
    <svg class="qgis"><use href="#qgis"/></svg>
    <span class="title">*React nuclis - QGIS</span>
    <div class="winbtns">
      <svg class="wb" viewBox="0 0 16 16"><path d="M0 8h16" stroke="#111" fill="none"/></svg>
      <svg class="wb" viewBox="0 0 16 16"><path d="M.5 4.500h11v11H.5zM4.500 4V.5h11v11H12" stroke="#111" fill="none"/></svg>
      <svg class="wb" viewBox="0 0 16 16"><path d="M.5 .5l15 15M15.500 .5l-15 15" stroke="#111" fill="none"/></svg>
    </div>
  </header>

  <nav class="menubar">
    <span>Pro<u>j</u>ecte</span><span><u>E</u>dita</span><span><u>V</u>isualitza</span><span><u>C</u>apa</span><span>Preferèncie<u>s</u></span><span><u>C</u>omplements</span><span>Vect<u>o</u>rial</span><span><u>R</u>àster</span><span>Base de <u>d</u>ades</span><span>Lloc <u>w</u>eb</span><span><u>M</u>esh</span><span>Pro<u>c</u>és</span><span class="m-help"><u>A</u>juda</span>
  </nav>

  <div class="toolbar">
    <i class="grip g-first"></i>
    <b class="tb"><svg><use href="#new"/></svg></b><b class="tb"><svg><use href="#open"/></svg></b><b class="tb"><svg><use href="#save"/></svg></b><b class="tb"><svg><use href="#saveas"/></svg></b><b class="tb"><svg><use href="#layout"/></svg></b><b class="tb"><svg><use href="#style"/></svg></b>
    <i class="grip g-wide"></i>
    <b class="tb on"><svg><use href="#hand"/></svg></b><b class="tb"><svg><use href="#pan"/></svg></b><b class="tb"><svg><use href="#zin"/></svg></b><b class="tb"><svg><use href="#zout"/></svg></b><b class="tb"><svg><use href="#full"/></svg></b><b class="tb"><svg><use href="#zsel"/></svg></b><b class="tb"><svg><use href="#zlay"/></svg></b><b class="tb"><svg><use href="#z11"/></svg></b><b class="tb"><svg><use href="#zlast"/></svg></b><b class="tb"><svg><use href="#znext"/></svg></b><b class="tb"><svg><use href="#newmap"/></svg></b><b class="tb"><svg><use href="#newbm"/></svg></b><b class="tb"><svg><use href="#showbm"/></svg></b><b class="tb"><svg><use href="#refresh"/></svg></b>
    <i class="grip g-mid"></i>
    <b class="tb"><svg><use href="#ident"/></svg></b><b class="tb"><svg><use href="#actions"/></svg></b><i class="dd off"></i><b class="tb"><svg><use href="#select"/></svg></b><i class="dd"></i><b class="tb"><svg><use href="#select2"/></svg></b><i class="dd n"></i><b class="tb"><svg><use href="#desel"/></svg></b><b class="tb"><svg><use href="#table"/></svg></b><b class="tb"><svg><use href="#abacus"/></svg></b><b class="tb"><svg><use href="#gear"/></svg></b><b class="tb"><svg><use href="#sigma"/></svg></b><b class="tb"><svg><use href="#ruler"/></svg></b><i class="dd"></i><b class="tb"><svg><use href="#tip"/></svg></b><b class="tb"><svg><use href="#txtann"/></svg></b><i class="dd"></i>
  </div>

  <div class="toolbar">
    <i class="grip g-first"></i>
    <b class="tb"><svg><use href="#dsm"/></svg></b><b class="tb"><svg><use href="#newgpkg"/></svg></b><b class="tb"><svg><use href="#newshp"/></svg></b><b class="tb"><svg><use href="#newfeather"/></svg></b><b class="tb"><svg><use href="#chip"/></svg></b><i class="sep"></i><b class="tb"><svg><use href="#virt"/></svg></b>
    <i class="grip g-mid2"></i>
    <b class="tb"><svg><use href="#g-edits"/></svg></b><b class="tb"><svg><use href="#pencil"/></svg></b><b class="tb"><svg><use href="#g-save"/></svg></b><b class="tb"><svg><use href="#g-add"/></svg></b><b class="tb"><svg><use href="#g-vert"/></svg></b><i class="dd off"></i><b class="tb"><svg><use href="#g-mod"/></svg></b><b class="tb"><svg><use href="#g-del"/></svg></b><b class="tb"><svg><use href="#g-cut"/></svg></b><b class="tb"><svg><use href="#g-copy"/></svg></b><b class="tb"><svg><use href="#g-paste"/></svg></b><b class="tb"><svg><use href="#g-undo"/></svg></b><b class="tb"><svg><use href="#g-redo"/></svg></b>
    <i class="grip g-mid"></i>
    <b class="tb"><svg><use href="#lab-y"/></svg></b><b class="tb"><svg><use href="#diag"/></svg></b><i class="sep wide"></i><b class="tb"><svg><use href="#lab-b"/></svg></b><b class="tb"><svg><use href="#lab-r"/></svg></b><i class="sep"></i><b class="tb"><svg><use href="#g-lp"/></svg></b><b class="tb"><svg><use href="#g-lv"/></svg></b><b class="tb"><svg><use href="#g-lm"/></svg></b><b class="tb"><svg><use href="#g-lr"/></svg></b><b class="tb"><svg><use href="#g-le"/></svg></b>
    <i class="grip g-mid2"></i>
    <b class="tb"><svg><use href="#metasearch"/></svg></b>
    <i class="grip g-mid2"></i>
    <b class="tb"><svg><use href="#python"/></svg></b>
    <i class="grip g-mid2"></i>
    <b class="tb"><svg><use href="#help"/></svg></b>
    <i class="grip g-mid2"></i>
  </div>

  <main class="workspace">
    <aside class="leftcol">
      <section class="dock browser">
        <div class="dockhead"><span>Explorador</span><span class="dockbtns"><i class="db db-float"></i><i class="db db-close"></i></span></div>
        <div class="docktools">
          <b class="st"><svg><use href="#s-add"/></svg></b><b class="st"><svg><use href="#refresh"/></svg></b><b class="st"><svg><use href="#s-filter"/></svg></b><b class="st"><svg><use href="#s-collapse"/></svg></b><b class="st"><svg><use href="#s-info"/></svg></b>
        </div>
        <div class="treebox">
          <ul class="tree">
            <li><i class="arr none"></i><svg><use href="#star"/></svg><span>Preferits</span></li>
            <li><i class="arr"></i><svg><use href="#bookm"/></svg><span>Spatial Bookmarks</span></li>
            <li><i class="arr"></i><svg><use href="#home"/></svg><span>Inici</span></li>
            <li><i class="arr"></i><svg><use href="#dir"/></svg><span>C:\</span></li>
            <li><i class="arr"></i><svg><use href="#dir"/></svg><span>D:\</span></li>
            <li><i class="arr none"></i><svg><use href="#gpkg"/></svg><span>GeoPackage</span></li>
            <li><i class="arr none"></i><svg><use href="#feather"/></svg><span>SpatiaLite</span></li>
            <li><i class="arr none"></i><svg><use href="#elephant"/></svg><span>PostGIS</span></li>
            <li><i class="arr none"></i><svg><use href="#mssql"/></svg><span>MSSQL</span></li>
            <li><i class="arr none"></i><svg><use href="#oracle"/></svg><span>Oracle</span></li>
            <li><i class="arr none"></i><svg><use href="#db2"/></svg><span>DB2</span></li>
            <li><i class="arr none"></i><svg><use href="#globe"/></svg><span>WMS/WMTS</span></li>
            <li><i class="arr"></i><svg><use href="#globe"/></svg><span>XYZ Tiles</span></li>
          </ul>
          <div class="vscroll">
            <i class="sb-btn"><i class="tri up"></i></i>
            <i class="sb-thumb"></i>
            <i class="sb-track"></i>
            <i class="sb-btn"><i class="tri down"></i></i>
          </div>
        </div>
      </section>
      <section class="dock layers">
        <div class="dockhead"><span>Capes</span><span class="dockbtns"><i class="db db-float"></i><i class="db db-close"></i></span></div>
        <div class="docktools">
          <b class="st"><svg><use href="#s-brush"/></svg></b><b class="st"><svg><use href="#s-group"/></svg></b><b class="st"><svg><use href="#s-eye"/></svg></b><b class="st"><svg><use href="#s-filter"/></svg></b><b class="st narrow"><svg><use href="#s-eps"/></svg></b><i class="dd tight cdd"></i><b class="st"><svg><use href="#s-expand"/></svg></b><b class="st"><svg><use href="#s-collapse"/></svg></b><b class="st"><svg><use href="#s-rem"/></svg></b>
        </div>
        <div class="layerbox">
          <div class="layerrow sel">
            <i class="tri sel-arr"></i>
            <i class="chk"></i>
            <svg class="layer-ic"><use href="#layer-ic"/></svg>
            <span class="layername">SHP_Municipis_FO</span>
            <i class="sel-grip"></i>
          </div>
          <div class="legend"><i class="chk"></i><i class="swatch red"></i><span>A</span></div>
          <div class="legend"><i class="chk"></i><i class="swatch yellow"></i><span>B</span></div>
          <div class="legend"><i class="chk"></i><i class="swatch green"></i><span>C</span></div>
        </div>
      </section>
    </aside>

    <section class="canvas">
      <svg class="map" viewBox="422 151 1042 832" width="1042" height="832" role="img" aria-label="Mapa de municipis">
        <g filter="url(#coast)">
          <use href="#land" class="halo"/>
          <use href="#land" class="fillland"/>
          <g clip-path="url(#clip-big)"><rect x="422" y="151" width="1042" height="832" fill="url(#hex-x)" filter="url(#big-wob)"/></g>
          <g clip-path="url(#clip-med)"><rect x="422" y="151" width="1042" height="832" fill="url(#hex-m)" filter="url(#mesh-wob)"/></g>
          <g clip-path="url(#clip-small)"><rect x="422" y="151" width="1042" height="832" fill="url(#hex-s)" filter="url(#mesh-wob)"/><rect x="422" y="151" width="1042" height="832" fill="url(#hex-x)" filter="url(#mesh-wob2)"/></g>
          <g transform="translate(640 150) scale(.4464 .3333)" class="ov">
            <polygon class="hole" points="640,735 690,690 745,720 770,745 745,765 690,765 640,750"/>
            <polygon class="hole" points="205,740 225,730 235,760 222,810 208,790"/>
            <polygon class="gr" points="100,240 135,165 160,130 218,118 260,125 300,145 340,150 370,200 385,235 402,265 385,300 385,350 398,400 370,410 350,425 360,450 400,480 405,525 340,565 310,530 290,500 295,410 265,380 250,340 210,305 170,315 120,310"/>
            <polyline class="ln" points="230,150 225,190 190,240 190,285 170,295"/>
            <polyline class="ln" points="300,150 300,215 270,250 260,330 250,340"/>
            <polyline class="ln" points="378,230 355,260 360,300 355,320 330,345 260,330"/>
            <polyline class="ln" points="360,350 360,380 330,420 295,415"/>
            <polyline class="ln" points="320,430 345,490 395,525"/>
            <polygon class="gr" points="745,570 790,525 810,500 825,560 850,600 810,630 775,680 770,715 745,715 745,680 775,640 735,640"/>
            <polyline class="ln" points="770,560 780,610 760,640"/><polyline class="ln" points="790,530 800,590 840,605"/>
            <polygon class="rd" points="570,765 600,745 640,755 640,790 680,795 705,810 680,825 670,860 665,910 695,950 705,1010 650,1015 625,985 600,900 600,830 575,800"/>
            <polyline class="ln" points="575,790 605,800 615,830 650,810 680,820"/><polyline class="ln" points="600,840 640,850 670,850"/><polyline class="ln" points="645,940 675,950 660,985 640,960 665,945"/>
            <polygon class="gr" points="555,1020 600,965 640,1000 700,960 750,1000 770,1060 720,1090 725,1140 690,1175 610,1190 590,1150 540,1165 555,1100"/>
            <polyline class="ln" points="600,965 610,1020 580,1070 555,1050"/><polyline class="ln" points="640,1000 680,1040 680,1085 720,1090"/><polyline class="ln" points="680,1060 620,1085 590,1080"/><polyline class="ln" points="625,1085 610,1190"/><polyline class="ln" points="690,1100 695,1150 690,1175"/>
            <polygon class="rd" points="435,995 450,960 480,970 510,965 535,985 530,1005 500,1030 480,1040 455,1060 450,1040"/>
            <polygon class="rd" points="895,595 915,615 960,620 955,680 945,710 915,745 895,720 905,680 890,660"/>
            <polyline class="ln" points="905,680 930,660 950,695 910,700"/>
            <polygon class="rd" points="1240,780 1270,775 1272,800 1250,810"/><polygon class="rd" points="1440,760 1460,745 1470,800 1450,785"/><polygon class="rd" points="1365,830 1385,810 1400,830 1385,850 1365,845"/>
            <polygon class="gr" points="880,820 900,830 925,870 945,890 950,950 925,955 895,935 890,880"/><polyline class="ln" points="905,880 925,900 920,950"/>
            <polygon class="gr" points="1000,1005 1050,985 1052,1030 1025,1040"/><polygon class="gr" points="915,1080 945,1065 975,1100 970,1125 945,1120"/><polygon class="gr" points="875,1105 925,1105 930,1170 900,1185 860,1170"/><polygon class="gr" points="790,1180 820,1150 855,1170 820,1180"/><polygon class="gr" points="870,1205 910,1190 915,1250 880,1220"/>
            <polygon class="gr" points="1365,905 1375,905 1375,925 1365,925"/><polygon class="gr" points="1098,1235 1110,1230 1115,1255 1100,1255"/>
          </g>
          <g transform="translate(540 500) scale(.5102 .3333)" class="ov">
            <polygon class="hole" points="705,530 740,505 760,540 795,560 780,590 740,580"/>
            <polygon class="hole" points="865,90 900,20 890,120"/>
            <polygon class="hole" points="295,690 305,685 300,710 285,705"/>
            <polygon class="gr" points="295,325 340,290 365,285 390,300 370,320 375,365 360,345 320,340 310,350"/>
            <polygon class="gr" points="660,635 680,600 690,640 660,665"/>
            <polygon class="gr" points="520,595 545,575 565,600 600,590 635,605 630,625 680,605 690,680 705,730 665,745 660,680 640,660 600,670 590,640 565,640 555,650 530,650"/>
            <polyline class="ln" points="565,600 570,640"/><polyline class="ln" points="630,625 640,660"/><polyline class="ln" points="660,635 690,640"/><polyline class="ln" points="665,690 700,680"/>
            <polygon class="gr" points="270,810 310,730 350,740 340,790 350,850 325,860 310,970 240,960 240,880 225,865 250,830"/>
            <polyline class="ln" points="300,770 350,770"/><polyline class="ln" points="285,795 320,810 340,790"/><polyline class="ln" points="250,830 300,810"/>
            <polygon class="gr" points="135,910 165,850 190,850 205,870 165,900 155,925"/>
            <polygon class="gr" points="125,1045 165,1015 170,1050 135,1055"/>
            <polygon class="gr" points="1155,190 1165,175 1170,205 1160,205"/><polygon class="gr" points="820,260 835,265 835,310 820,300"/><polygon class="gr" points="1165,340 1175,325 1185,350 1170,365"/><polygon class="gr" points="1105,380 1115,400 1105,410"/>
            <polygon class="gr" points="960,540 975,515 985,550 990,580 970,575 950,555"/>
            <polygon class="gr" points="495,590 505,550 518,570 510,595"/>
            <polygon class="rd" points="240,115 270,100 290,125 270,170"/>
            <polygon class="rd" points="335,785 370,795 385,785 410,810 385,825 370,830 345,820"/>
            <polygon class="rd" points="595,675 625,675 620,695 600,690"/>
            <polygon class="rd" points="605,735 615,720 612,745"/>
          </g>
        </g>
      </svg>
    </section>

    <aside class="rightcol">
      <div class="dockhead rhead"><span>Resultats de la identificació</span><span class="dockbtns"><i class="db db-float"></i><i class="db db-close"></i></span></div>
      <div class="docktools rtools">
        <b class="st"><svg><use href="#s-tree"/></svg></b><i class="vsep"></i><b class="st"><svg><use href="#s-expand"/></svg></b><b class="st"><svg><use href="#s-collapse"/></svg></b><b class="st"><svg><use href="#s-expsel"/></svg></b><i class="vsep"></i><b class="st"><svg><use href="#desel"/></svg></b><i class="vsep"></i><b class="st"><svg><use href="#s-copy"/></svg></b><b class="st"><svg><use href="#s-print"/></svg></b><i class="vsep"></i><b class="st"><svg><use href="#s-idsel"/></svg></b><i class="dd tight"></i><b class="st"><svg><use href="#s-wrench"/></svg></b>
      </div>
      <div class="restable">
        <div class="reshead"><span class="col1">Objecte</span><span class="col2">Valor</span></div>
      </div>
      <div class="modeform">
        <label>Mode</label>
        <span class="combo mode">Capa actual<i class="tri down"></i></span>
      </div>
      <div class="viewform">
        <label class="dim">Vista</label>
        <span class="combo view dim">Arbre<i class="tri down"></i></span>
        <span class="btn">Ajuda</span>
      </div>
    </aside>
  </main>

  <footer class="statusbar">
    <span class="locator"><svg><use href="#search"/></svg>Escriu per localitzar (Ctrl+K)</span>
    <span class="message">Commuta l'edició de la capa activa</span>
    <span class="s-label coord">Coordenada</span>
    <span class="field coordf">532153,4633746</span>
    <svg class="s-ic mouse"><use href="#mouse"/></svg>
    <span class="s-label">Escala</span>
    <span class="field scalef">1:1854573<i class="scalearrow"><i class="tri down"></i></i></span>
    <svg class="s-ic lock"><use href="#lock"/></svg>
    <span class="s-label">Lupa</span>
    <span class="field spin lupaf">100%<i class="updown"><i class="tri up"></i><i class="tri down"></i></i></span>
    <span class="s-label rot">Rotació</span>
    <span class="field spin rotf">0,0 °<i class="updown"><i class="tri up"></i><i class="tri down"></i></i></span>
    <i class="chk s-chk"></i>
    <span class="s-label rend">Renderitza</span>
    <svg class="s-ic crs"><use href="#crs"/></svg>
    <span class="s-label epsg">EPSG:25831</span>
    <svg class="s-ic chat"><use href="#chat"/></svg>
  </footer>
</div>
</body>
</html>
```

FILE: styles.css
```css
* { box-sizing: border-box; }
html, body { margin: 0; height: 100%; }
body { background: #f0f0f0; overflow: hidden; font: 16.700px/1.2 "Noto Sans", "Open Sans", sans-serif; color: #111; }
.defs { position: absolute; }
.app { display: flex; flex-direction: column; height: 1020px; width: 1920px; }

.ictext { font: 700 8px "Liberation Sans", sans-serif; text-anchor: middle; fill: #222; }
.ictext.small { font-size: 7px; fill: #666; }
.ictext.italic { font: italic 700 14px "Liberation Serif", serif; fill: #fff; }
.ictext.italic.big { font-size: 18px; }
.ictext.serif { font: 700 15px "Liberation Serif", serif; }
.ictext.lab { font-size: 9px; fill: #111; }
.ictext.lab.red { fill: #c22; }
.ictext.helpq { font: 400 14px "Liberation Sans", sans-serif; fill: #e6eef6; }
.ictext.db2 { font: 400 8.500px "Liberation Sans", sans-serif; fill: #e8f0f8; }
.ictext.eps { font: 400 17px "Liberation Serif", serif; fill: #444; }

/* title bar */
.titlebar { height: 34px; background: #fff; display: flex; align-items: center; position: relative; padding: 0 0 4px 3px; flex: none; }
.topstrip { position: absolute; left: 780px; top: 0; width: 360px; height: 2px; background: #e6e6e6; }
.topdark { position: absolute; left: 143px; top: 0; width: 72px; height: 2px; background: #444; }
.qgis { width: 24px; height: 24px; flex: none; margin-top: 2px; }
.title { margin-left: 4px; margin-top: 4px; }
.winbtns { margin-left: auto; display: flex; gap: 55px; padding-right: 28px; margin-top: 2px; }
.wb { width: 16px; height: 16px; }

/* menu */
.menubar { height: 30px; background: #eeeeee; border-bottom: 1px solid #d4d4d4; display: flex; align-items: center; padding: 1px 0 0 5.500px; flex: none; }
.menubar span { padding: 0 8.300px; }
.menubar .m-help { margin-left: 5px; }

/* toolbars */
.toolbar { height: 43px; background: linear-gradient(#fbfbfb, #ededed); border-bottom: 1px solid #bdbdbd; display: flex; align-items: center; flex: none; }
.tb { width: 32.900px; height: 32px; flex: none; display: flex; align-items: center; justify-content: center; border: 1px solid transparent; border-radius: 2px; }
.tb svg { width: 24px; height: 24px; display: block; }
.tb.on { background: #dedede; border-color: #a8a8a8; }
.grip { width: 4px; height: 24px; flex: none; background-image: radial-gradient(#b5b5b5 40%, transparent 45%); background-size: 2px 3px; }
.g-first { margin: 0 6.500px 0 8px; }
.g-wide { margin: 0 5.500px 0 15.500px; }
.g-mid { margin: 0 6px 0 14.500px; }
.g-mid2 { margin: 0 5.500px 0 14.500px; }
.sep { width: 1px; height: 24px; background: #d4d4d4; margin: 0 4px; flex: none; }
.sep.wide { margin: 0 6px; }
.vsep { width: 1px; height: 14px; background: #d4d4d4; margin: 0 6px; flex: none; }
.dd { width: 19px; height: 10px; flex: none; position: relative; }
.dd.n { width: 16.500px; }
.dd::after { content: ""; position: absolute; left: 3px; top: 2px; border: 6px solid transparent; border-top: 6px solid #555; border-bottom: 0; }
.dd.off::after { border-top-color: #b5b5b5; }
.dd.tight { width: 18px; }
.dd.cdd { margin: 0 1.500px 0 7.500px; }

/* layout */
.workspace { flex: 1; display: flex; min-height: 0; }
.leftcol { width: 412px; flex: none; display: flex; flex-direction: column; margin-right: 9px; }
.dock { display: flex; flex-direction: column; }
.browser { height: 403px; flex: none; }
.layers { flex: 1; min-height: 0; padding-top: 9px; }
.dockhead { display: flex; align-items: center; justify-content: space-between; height: 25px; padding: 0 1px 0 4px; flex: none; }
.dockbtns { display: flex; gap: 3px; margin-right: 0; }
.db { width: 12px; height: 12px; border: 1px solid #777; border-radius: 3px; position: relative; display: block; background: #f6f6f6; }
.db-float::after { content: ""; position: absolute; left: 2px; top: 2px; width: 6px; height: 6px; border: 1px solid #555; border-radius: 1px; }
.db-close::after { content: "×"; position: absolute; inset: 0; font: 700 11px/10px "Liberation Sans", sans-serif; text-align: center; color: #333; }
.docktools { height: 31px; display: flex; align-items: center; padding: 0 0 5px 5px; flex: none; }
.layers .docktools { height: 32px; padding-bottom: 4px; }
.st { width: 25px; height: 20px; display: flex; align-items: center; justify-content: center; flex: none; }
.st svg { width: 16px; height: 16px; display: block; }
.st.narrow { width: 15px; }

.treebox { height: 347px; background: #fff; border: 1px solid #b8b8b8; display: flex; overflow: hidden; flex: none; }
.tree { list-style: none; margin: 0; padding: 2px 0 0; flex: 1; }
.tree li { height: 27px; display: flex; align-items: center; gap: 6px; padding-left: 11px; }
.tree li svg { width: 24px; height: 24px; flex: none; }
.arr { width: 0; height: 0; border: 6px solid transparent; border-left: 7px solid #555; border-right: 0; margin-right: 9px; flex: none; }
.arr.none { border-left-color: transparent; }
.vscroll { width: 21px; border-left: 1px solid #cfcfcf; display: flex; flex-direction: column; flex: none; }
.sb-btn { height: 21px; background: linear-gradient(#fbfbfb, #ececec); display: flex; align-items: center; justify-content: center; flex: none; border-bottom: 1px solid #d0d0d0; }
.sb-btn:last-child { border-top: 1px solid #d0d0d0; border-bottom: 0; }
.sb-thumb { height: 193px; background: linear-gradient(90deg, #f2f2f2, #fbfbfb); border-bottom: 1px solid #cfcfcf; flex: none; }
.sb-track { flex: 1; background: #e3e3e3; }
.tri { width: 0; height: 0; display: block; border: 6px solid transparent; border-top: 0; border-bottom: 6px solid #555; }
.tri.down { border-bottom: 0; border-top: 6px solid #555; }

.layerbox { flex: 1; background: #fff; border: 1px solid #b8b8b8; min-height: 0; }
.layerrow.sel { height: 27px; margin-bottom: 1px; background: #1b85de; display: flex; align-items: center; position: relative; color: #fff; padding-left: 9px; }
.sel-arr { border-top: 6px solid #0d3f78; border-bottom: 0; border-left-width: 6px; border-right-width: 6px; }
.chk { width: 21px; height: 21px; background: #fff; border: 1px solid #bbb; display: block; flex: none; position: relative; }
.chk::after { content: ""; position: absolute; left: 6px; top: 1px; width: 7px; height: 14px; border: solid #000; border-width: 0 3px 3px 0; transform: rotate(40deg); }
.layerrow .chk { margin-left: 12px; }
.layer-ic { width: 24px; height: 22px; margin-left: 6px; flex: none; }
.layername { margin-left: 6px; font-weight: 700; text-decoration: underline; font-size: 17.200px; }
.sel-grip { position: absolute; right: 1px; top: 2px; width: 6px; height: 24px; background: #d9dde2; }
.legend { height: 27px; display: flex; align-items: center; padding-left: 63px; }
.swatch { width: 22px; height: 21px; margin-left: 6px; border: 1px solid #555; flex: none; }
.swatch.red { background: #dd1e22; }
.swatch.yellow { background: #ecec17; }
.swatch.green { background: #3ca325; }
.legend span { margin-left: 7px; }

.canvas { width: 1044px; flex: none; background: #fff; border: 1px solid #b5b5b5; overflow: hidden; }
.map { display: block; }
.hexline { fill: none; stroke: #25251a; stroke-width: 1.500; }
.halo { fill: #25251a; stroke: #25251a; stroke-width: 2.800; }
.ov * { vector-effect: non-scaling-stroke; }
[id^="l-"] { vector-effect: non-scaling-stroke; }
.fillland { fill: #ecec17; stroke: none; }
.ov .gr { fill: #3ca325; stroke: #25251a; stroke-width: 1.400; }
.ov .rd { fill: #dd1e22; stroke: #25251a; stroke-width: 1.400; }
.ov .ln { fill: none; stroke: #25251a; stroke-width: 1.400; }
.ov .hole { fill: #fff; stroke: #25251a; stroke-width: 1.400; }

.rightcol { flex: 1; min-width: 0; display: flex; flex-direction: column; padding-left: 9px; }
.rhead { padding-left: 4px; padding-right: 1px; }
.rhead .dockbtns { gap: 2px; }
.rtools { padding-left: 6px; }
.rtools .st { width: 25.500px; }
.rtools .vsep { margin: 0 4px; }
.restable { flex: 1; min-height: 0; background: #fff; border: 1px solid #b8b8b8; }
.reshead { height: 31px; display: flex; align-items: center; padding-top: 1px; background: linear-gradient(#fdfdfd, #ececec); border-bottom: 1px solid #b8b8b8; }
.col1 { width: 242px; padding-left: 3px; border-right: 1px solid #c8c8c8; height: 100%; display: flex; align-items: center; }
.col2 { padding-left: 3px; }
.modeform { height: 37px; display: flex; align-items: center; padding: 5px 6px 0 5px; flex: none; font-size: 15.500px; }
.modeform label { width: 44px; }
.combo { display: flex; align-items: center; justify-content: space-between; height: 31px; background: linear-gradient(#fbfbfb, #f0f0f0); border: 1px solid #c0c0c0; border-radius: 3px; padding: 0 12px 0 4px; }
.combo.mode { flex: 1; }
.viewform { height: 37px; display: flex; align-items: center; padding: 0 6px 5px 5px; flex: none; font-size: 15.500px; }
.viewform label { width: 40px; }
.dim { color: #8a8a8a; }
.combo.view { width: 93px; height: 26px; background: #f0f0f0; border-color: #d0d0d0; padding-right: 14px; }
.combo.view .tri { border-top-color: #aaa; }
.btn { margin-left: auto; width: 59px; height: 25px; border: 1px solid #c6c6c6; border-radius: 3px; display: flex; align-items: center; justify-content: center; background: linear-gradient(#fbfbfb, #f0f0f0); font-size: 15px; }

/* status */
.statusbar { height: 37px; flex: none; display: flex; align-items: center; padding: 0 0 0 4px; font-size: 15px; }
.locator { width: 360px; height: 26px; background: #fff; border: 1px solid #c0c0c0; border-radius: 3px; color: #8c8c8c; display: flex; align-items: center; padding-left: 6px; gap: 6px; flex: none; font-size: 14.500px; }
.locator svg { width: 14px; height: 14px; flex: none; }
.message { margin-left: 8px; width: 470px; flex: none; }
.field { height: 26px; background: #fff; border: 1px solid #c0c0c0; border-radius: 3px; display: flex; align-items: center; padding-left: 5px; flex: none; position: relative; }
.coord { margin-right: 1px; }
.coordf { width: 138px; font-size: 15.800px; }
.mouse { width: 24px; height: 24px; margin: 0 14px 0 4px; }
.scalef { width: 113px; margin-left: 2px; padding-left: 3px; font-size: 15.500px; }
.scalearrow { position: absolute; right: 0; top: 0; bottom: 0; width: 29px; background: #f0f0f0; display: flex; align-items: center; justify-content: center; border-radius: 0 3px 3px 0; }
.lock { width: 22px; height: 24px; margin: 0 8px 0 12px; flex: none; }
.spin { padding-right: 22px; font-size: 15.500px; }
.lupaf { width: 106px; margin-left: 2px; }
.updown { position: absolute; right: 0; top: 0; bottom: 0; width: 20px; border-left: 1px solid #d8d8d8; display: flex; flex-direction: column; align-items: center; justify-content: center; gap: 3px; background: #f6f6f6; border-radius: 0 3px 3px 0; }
.updown .tri { border-width: 5px; border-top: 0; border-bottom: 5px solid #555; }
.updown .tri.down { border-bottom: 0; border-top: 5px solid #555; }
.rot { margin: 0 9px 0 8px; }
.rotf { width: 100px; }
.s-chk { margin-left: 7px; }
.rend { margin-left: 7px; }
.crs { width: 22px; height: 22px; margin: 0 5px 0 18px; flex: none; }
.s-ic { display: block; flex: none; }
.epsg { font-size: 15.800px; }
.chat { width: 25px; height: 25px; margin-left: 22px; }
```
